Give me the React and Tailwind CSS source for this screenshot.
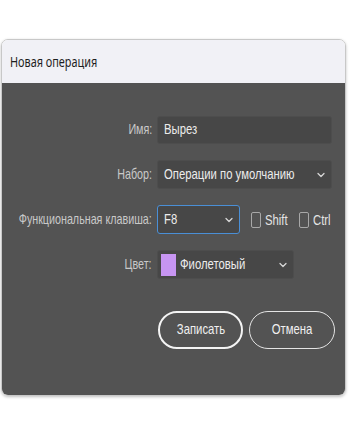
import { ChevronDown } from "lucide-react";

const font = { fontFamily: '"Liberation Sans", Arial, sans-serif' };

// the whole shot is squeezed horizontally, so text is narrowed with scale-x
function Narrow({ children, right, className = "" }) {
  return (
    <span
      className={`inline-block whitespace-nowrap ${right ? "scale-x-[0.74] origin-right" : "scale-x-[0.78] origin-left"} ${className}`}
    >
      {children}
    </span>
  );
}

function Row({ label, children, className = "" }) {
  return (
    <div className={`flex items-center ${className}`}>
      <div className="w-[155px] flex-none pr-[5px] flex justify-end text-[14.5px] text-[#c9c9c9]">
        <Narrow right>{label}</Narrow>
      </div>
      {children}
    </div>
  );
}

function Select({ value, w, focus, swatch }) {
  return (
    <div
      className={`${w} flex-none h-[29px] flex items-center rounded-[3px] bg-[#474747] text-[14.5px] text-[#ececec] ${
        focus ? "border border-[#4a8fd6]" : "border border-[#4d4d4d]"
      }`}
    >
      {swatch && <div className="flex-none ml-[3px] w-[15px] h-[22px] bg-[#c795f2]" />}
      <div className={`flex-1 min-w-0 ${swatch ? "ml-[4px]" : "ml-[6px]"}`}>
        <Narrow>{value}</Narrow>
      </div>
      <ChevronDown size={12} strokeWidth={2.5} className="flex-none mr-[4px] text-[#d8d8d8]" />
    </div>
  );
}

function Check({ label, w }) {
  return (
    <div className={`flex items-center ${w}`}>
      <div className="flex-none w-[10px] h-[16px] border border-[#a8a8a8] rounded-[2px]" />
      <div className="flex-1 min-w-0 ml-[4px]">
        <Narrow className="text-[14.5px] text-[#e4e4e4]">{label}</Narrow>
      </div>
    </div>
  );
}

export default function App() {
  return (
    <div className="w-[350px] h-[431px] bg-white pt-[39px] pl-[1px]" style={font}>
      <div className="w-[345px] h-[357px] rounded-[7px] overflow-hidden border border-[#c8c8c8] shadow-[0_1px_3px_rgba(0,0,0,0.25)] flex flex-col">
        <div
          className="h-[43px] bg-[#f1f1f6] flex items-center pl-[8px] text-[14.5px] text-[#1e1e1e]"
          style={{ fontFamily: '"Noto Sans", "Open Sans", sans-serif' }}
        >
          <span className="inline-block whitespace-nowrap scale-x-[0.75] origin-left">Новая операция</span>
        </div>
        <div className="flex-1 bg-[#535353] pt-[33px]">
          <Row label="Имя:">
            <div className="w-[175px] h-[28px] flex items-center rounded-[3px] bg-[#474747] border border-[#4d4d4d] text-[14.5px] text-[#ececec] pl-[6px]">
              <Narrow>Вырез</Narrow>
            </div>
          </Row>
          <Row label="Набор:" className="mt-[16px]">
            <Select value="Операции по умолчанию" w="w-[175px]" />
          </Row>
          <Row label="Функциональная клавиша:" className="mt-[16px]">
            <Select value="F8" w="w-[83px]" focus />
            <div className="ml-[11px] flex">
              <Check label="Shift" w="w-[48px]" />
              <Check label="Ctrl" w="w-[36px]" />
            </div>
          </Row>
          <Row label="Цвет:" className="mt-[16px]">
            <Select value="Фиолетовый" w="w-[137px]" swatch />
          </Row>
          <div className="mt-[32px] flex pl-[156px] gap-[6px]">
            <button className="w-[85px] h-[38px] rounded-full border-2 border-[#f4f4f4] text-[14.5px] text-[#f0f0f0]">
              <span className="inline-block scale-x-[0.78]">Записать</span>
            </button>
            <button className="w-[86px] h-[38px] rounded-full border-[1.5px] border-[#e4e4e4] text-[14.5px] text-[#f0f0f0]">
              <span className="inline-block scale-x-[0.78]">Отмена</span>
            </button>
          </div>
        </div>
      </div>
    </div>
  );
}
